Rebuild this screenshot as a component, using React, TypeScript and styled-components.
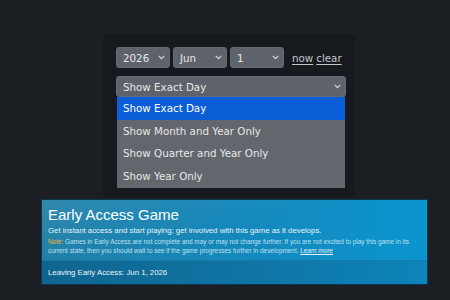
import React from 'react';
import styled, { createGlobalStyle } from 'styled-components';

const GlobalStyle = createGlobalStyle`
  html, body {
    margin: 0;
    padding: 0;
    background: #1b1f24;
  }
  * {
    box-sizing: border-box;
  }
`;

const Page = styled.div`
  width: 450px;
  height: 300px;
  overflow: hidden;
  padding-top: 35px;
  background: #1b1f24;
`;

const DatePanel = styled.div`
  margin-left: 103px;
  width: 252px;
  height: 162px;
  padding: 12px 0 0 13px;
  background: #16191d;
  font-family: 'DejaVu Sans', sans-serif;
  font-size: 10.3px;
  color: #e8e8e8;
`;

const SelectRow = styled.div`
  display: flex;
  align-items: center;
  gap: 3px;
`;

const SelectBox = styled.div<{ $width: number }>`
  position: relative;
  display: flex;
  align-items: center;
  justify-content: space-between;
  width: ${({ $width }) => $width}px;
  height: 21px;
  padding: 0 4px 0 6px;
  background: #5e626a;
  border: 1px solid #666a72;
  border-radius: 3px;
  white-space: nowrap;
`;

const Chevron = styled.svg`
  width: 7px;
  height: 5px;
  flex: none;
`;

const LinkGroup = styled.div`
  display: flex;
  gap: 3px;
  margin-left: 5px;
`;

const TextLink = styled.span`
  color: #c3c8cf;
  text-decoration: underline;
  text-underline-offset: 2px;
`;

const ModeSelect = styled.div`
  position: relative;
  margin-top: 8px;
  width: 230px;
`;

const OptionList = styled.div`
  position: absolute;
  top: 100%;
  left: 1px;
  right: 1px;
  background: #62666d;
  z-index: 2;
`;

const Option = styled.div<{ $active?: boolean }>`
  height: 22.7px;
  line-height: 22.7px;
  padding-left: 6px;
  white-space: nowrap;
  background: ${({ $active }) => ($active ? '#0b5ed7' : 'transparent')};
  color: ${({ $active }) => ($active ? '#ffffff' : '#e8e8e8')};
`;

const Banner = styled.div`
  margin: 2px 0 0 41px;
  width: 387px;
  border: 1px solid #0d3550;
  font-family: Arial, 'Liberation Sans', sans-serif;
  color: #ffffff;
  overflow: hidden;
`;

const BannerTop = styled.div`
  padding: 6px 6px 5px;
  background:
    linear-gradient(170deg, rgba(255, 255, 255, 0.07) 0%, rgba(255, 255, 255, 0) 45%),
    linear-gradient(to right, #2180a8 0%, #1489bd 55%, #0b95cf 100%);
`;

const BannerTitle = styled.div`
  font-size: 15px;
  line-height: 18px;
`;

const BannerSub = styled.div`
  margin-top: 2px;
  font-size: 7.8px;
  line-height: 9px;
  color: #e6f3f9;
`;

const BannerNote = styled.div`
  margin-top: 3px;
  font-size: 6.4px;
  line-height: 8.6px;
  color: #bfe0ee;
`;

const NoteLabel = styled.span`
  color: #f2b836;
`;

const LearnMore = styled.span`
  color: #e6f3f9;
  text-decoration: underline;
`;

const BannerFoot = styled.div`
  height: 24px;
  display: flex;
  align-items: center;
  padding-left: 6px;
  font-size: 7.8px;
  color: #eef6fa;
  background: linear-gradient(to right, #10658f 0%, #0f75a5 55%, #0d84bb 100%);
  border-top: 1px solid #1679a5;
`;

const ChevronIcon = () => (
  <Chevron viewBox="0 0 7 5">
    <path d="M0.8 0.9 L3.5 3.6 L6.2 0.9" fill="none" stroke="#d8dadd" strokeWidth="1.2" />
  </Chevron>
);

const modes = ['Show Exact Day', 'Show Month and Year Only', 'Show Quarter and Year Only', 'Show Year Only'];

const App: React.FC = () => {
  return (
    <Page>
      <GlobalStyle />
      <DatePanel>
        <SelectRow>
          <SelectBox $width={54}>
            2026
            <ChevronIcon />
          </SelectBox>
          <SelectBox $width={54}>
            Jun
            <ChevronIcon />
          </SelectBox>
          <SelectBox $width={54}>
            1
            <ChevronIcon />
          </SelectBox>
          <LinkGroup>
            <TextLink>now</TextLink>
            <TextLink>clear</TextLink>
          </LinkGroup>
        </SelectRow>

        <ModeSelect>
          <SelectBox $width={230}>
            Show Exact Day
            <ChevronIcon />
          </SelectBox>
          <OptionList>
            {modes.map((mode, i) => (
              <Option key={mode} $active={i === 0}>
                {mode}
              </Option>
            ))}
          </OptionList>
        </ModeSelect>
      </DatePanel>

      <Banner>
        <BannerTop>
          <BannerTitle>Early Access Game</BannerTitle>
          <BannerSub>Get instant access and start playing; get involved with this game as it develops.</BannerSub>
          <BannerNote>
            <NoteLabel>Note:</NoteLabel> Games in Early Access are not complete and may or may not change further. If you
            are not excited to play this game in its current state, then you should wait to see if the game progresses
            further in development. <LearnMore>Learn more</LearnMore>
          </BannerNote>
        </BannerTop>
        <BannerFoot>Leaving Early Access: Jun 1, 2026</BannerFoot>
      </Banner>
    </Page>
  );
};

export default App;
